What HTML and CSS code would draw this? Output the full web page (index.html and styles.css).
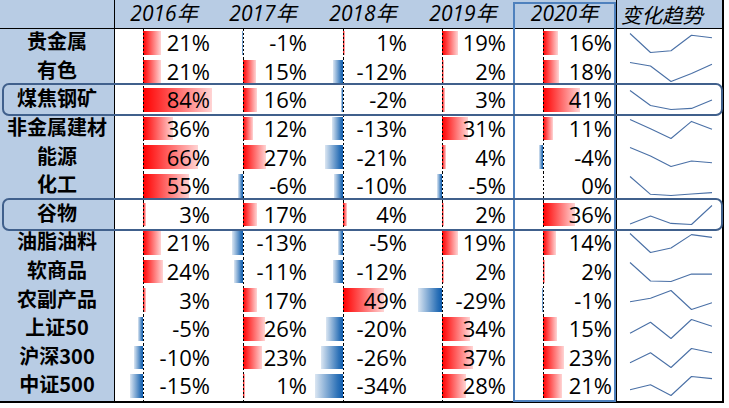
FILE: index.html
```html
<!DOCTYPE html>
<html lang="zh-CN">
<head>
<meta charset="utf-8">
<title>商品与指数年度涨跌</title>
<link rel="stylesheet" href="styles.css">
</head>
<body>
<div class="table">
  <div class="row head">
    <div class="lab"></div>
    <div class="hy">2016年</div>
    <div class="hy">2017年</div>
    <div class="hy">2018年</div>
    <div class="hy">2019年</div>
    <div class="hy">2020年</div>
    <div class="htrend"><span>变化趋势</span></div>
  </div>

  <div class="row">
    <div class="lab">贵金属</div>
    <div class="cell c16"><span class="bar pos" style="width:17.7px"></span><span class="axis"></span><span class="val">21%</span></div>
    <div class="cell c17"><span class="bar neg" style="width:1.5px"></span><span class="axis"></span><span class="val">-1%</span></div>
    <div class="cell c18"><span class="bar pos" style="width:1.5px"></span><span class="axis"></span><span class="val">1%</span></div>
    <div class="cell c19"><span class="bar pos" style="width:16.1px"></span><span class="axis"></span><span class="val">19%</span></div>
    <div class="cell c20"><span class="bar pos" style="width:14.6px"></span><span class="axis"></span><span class="val">16%</span></div>
    <div class="trend"><svg viewBox="0 0 105 28.6"><polyline points="13,4.5 33.5,23.5 54,21.8 74.5,6.2 95,8.8"/></svg></div>
  </div>

  <div class="row">
    <div class="lab">有色</div>
    <div class="cell c16"><span class="bar pos" style="width:17.7px"></span><span class="axis"></span><span class="val">21%</span></div>
    <div class="cell c17"><span class="bar pos" style="width:12.8px"></span><span class="axis"></span><span class="val">15%</span></div>
    <div class="cell c18"><span class="bar neg" style="width:10.3px"></span><span class="axis"></span><span class="val">-12%</span></div>
    <div class="cell c19"><span class="bar pos" style="width:2.1px"></span><span class="axis"></span><span class="val">2%</span></div>
    <div class="cell c20"><span class="bar pos" style="width:16.3px"></span><span class="axis"></span><span class="val">18%</span></div>
    <div class="trend"><svg viewBox="0 0 105 28.6"><polyline points="13,4.5 33.5,8 54,23.5 74.5,15.4 95,6.2"/></svg></div>
  </div>

  <div class="row hl">
    <div class="lab">煤焦钢矿</div>
    <div class="cell c16"><span class="bar pos" style="width:69.4px"></span><span class="axis"></span><span class="val">84%</span></div>
    <div class="cell c17"><span class="bar pos" style="width:13.6px"></span><span class="axis"></span><span class="val">16%</span></div>
    <div class="cell c18"><span class="bar neg" style="width:2.1px"></span><span class="axis"></span><span class="val">-2%</span></div>
    <div class="cell c19"><span class="bar pos" style="width:3px"></span><span class="axis"></span><span class="val">3%</span></div>
    <div class="cell c20"><span class="bar pos" style="width:36.6px"></span><span class="axis"></span><span class="val">41%</span></div>
    <div class="trend"><svg viewBox="0 0 105 28.6"><polyline points="13,4.5 33.5,19.5 54,23.5 74.5,22.4 95,14"/></svg></div>
  </div>

  <div class="row">
    <div class="lab">非金属建材</div>
    <div class="cell c16"><span class="bar pos" style="width:30px"></span><span class="axis"></span><span class="val">36%</span></div>
    <div class="cell c17"><span class="bar pos" style="width:10.3px"></span><span class="axis"></span><span class="val">12%</span></div>
    <div class="cell c18"><span class="bar neg" style="width:11.2px"></span><span class="axis"></span><span class="val">-13%</span></div>
    <div class="cell c19"><span class="bar pos" style="width:25.9px"></span><span class="axis"></span><span class="val">31%</span></div>
    <div class="cell c20"><span class="bar pos" style="width:10.2px"></span><span class="axis"></span><span class="val">11%</span></div>
    <div class="trend"><svg viewBox="0 0 105 28.6"><polyline points="13,4.5 33.5,13.8 54,23.5 74.5,6.4 95,14.2"/></svg></div>
  </div>

  <div class="row">
    <div class="lab">能源</div>
    <div class="cell c16"><span class="bar pos" style="width:54.6px"></span><span class="axis"></span><span class="val">66%</span></div>
    <div class="cell c17"><span class="bar pos" style="width:22.6px"></span><span class="axis"></span><span class="val">27%</span></div>
    <div class="cell c18"><span class="bar neg" style="width:17.7px"></span><span class="axis"></span><span class="val">-21%</span></div>
    <div class="cell c19"><span class="bar pos" style="width:3.8px"></span><span class="axis"></span><span class="val">4%</span></div>
    <div class="cell c20"><span class="bar neg" style="width:4px"></span><span class="axis"></span><span class="val">-4%</span></div>
    <div class="trend"><svg viewBox="0 0 105 28.6"><polyline points="13,4.5 33.5,13 54,23.5 74.5,18 95,19.8"/></svg></div>
  </div>

  <div class="row">
    <div class="lab">化工</div>
    <div class="cell c16"><span class="bar pos" style="width:45.6px"></span><span class="axis"></span><span class="val">55%</span></div>
    <div class="cell c17"><span class="bar neg" style="width:5.4px"></span><span class="axis"></span><span class="val">-6%</span></div>
    <div class="cell c18"><span class="bar neg" style="width:8.7px"></span><span class="axis"></span><span class="val">-10%</span></div>
    <div class="cell c19"><span class="bar neg" style="width:4.6px"></span><span class="axis"></span><span class="val">-5%</span></div>
    <div class="cell c20"><span class="axis"></span><span class="val">0%</span></div>
    <div class="trend"><svg viewBox="0 0 105 28.6"><polyline points="13,4.5 33.5,22.3 54,23.5 74.5,22 95,20.6"/></svg></div>
  </div>

  <div class="row hl">
    <div class="lab">谷物</div>
    <div class="cell c16"><span class="bar pos" style="width:3px"></span><span class="axis"></span><span class="val">3%</span></div>
    <div class="cell c17"><span class="bar pos" style="width:14.4px"></span><span class="axis"></span><span class="val">17%</span></div>
    <div class="cell c18"><span class="bar pos" style="width:3.8px"></span><span class="axis"></span><span class="val">4%</span></div>
    <div class="cell c19"><span class="bar pos" style="width:2.1px"></span><span class="axis"></span><span class="val">2%</span></div>
    <div class="cell c20"><span class="bar pos" style="width:32.2px"></span><span class="axis"></span><span class="val">36%</span></div>
    <div class="trend"><svg viewBox="0 0 105 28.6"><polyline points="13,22.9 33.5,15.1 54,22.4 74.5,23.5 95,4.5"/></svg></div>
  </div>

  <div class="row">
    <div class="lab">油脂油料</div>
    <div class="cell c16"><span class="bar pos" style="width:17.7px"></span><span class="axis"></span><span class="val">21%</span></div>
    <div class="cell c17"><span class="bar neg" style="width:11.2px"></span><span class="axis"></span><span class="val">-13%</span></div>
    <div class="cell c18"><span class="bar neg" style="width:4.6px"></span><span class="axis"></span><span class="val">-5%</span></div>
    <div class="cell c19"><span class="bar pos" style="width:16.1px"></span><span class="axis"></span><span class="val">19%</span></div>
    <div class="cell c20"><span class="bar pos" style="width:12.8px"></span><span class="axis"></span><span class="val">14%</span></div>
    <div class="trend"><svg viewBox="0 0 105 28.6"><polyline points="13,4.5 33.5,23.5 54,19 74.5,5.6 95,8.4"/></svg></div>
  </div>

  <div class="row">
    <div class="lab">软商品</div>
    <div class="cell c16"><span class="bar pos" style="width:20.2px"></span><span class="axis"></span><span class="val">24%</span></div>
    <div class="cell c17"><span class="bar neg" style="width:9.5px"></span><span class="axis"></span><span class="val">-11%</span></div>
    <div class="cell c18"><span class="bar neg" style="width:10.3px"></span><span class="axis"></span><span class="val">-12%</span></div>
    <div class="cell c19"><span class="bar pos" style="width:2.1px"></span><span class="axis"></span><span class="val">2%</span></div>
    <div class="cell c20"><span class="bar pos" style="width:2.3px"></span><span class="axis"></span><span class="val">2%</span></div>
    <div class="trend"><svg viewBox="0 0 105 28.6"><polyline points="13,4.5 33.5,23 54,23.5 74.5,16.1 95,16.1"/></svg></div>
  </div>

  <div class="row">
    <div class="lab">农副产品</div>
    <div class="cell c16"><span class="bar pos" style="width:3px"></span><span class="axis"></span><span class="val">3%</span></div>
    <div class="cell c17"><span class="bar pos" style="width:14.4px"></span><span class="axis"></span><span class="val">17%</span></div>
    <div class="cell c18"><span class="bar pos" style="width:40.7px"></span><span class="axis"></span><span class="val">49%</span></div>
    <div class="cell c19"><span class="bar neg" style="width:24.3px"></span><span class="axis"></span><span class="val">-29%</span></div>
    <div class="cell c20"><span class="bar neg" style="width:1.5px"></span><span class="axis"></span><span class="val">-1%</span></div>
    <div class="trend"><svg viewBox="0 0 105 28.6"><polyline points="13,15.7 33.5,12.3 54,4.5 74.5,23.5 95,16.7"/></svg></div>
  </div>

  <div class="row">
    <div class="lab">上证50</div>
    <div class="cell c16"><span class="bar neg" style="width:4.6px"></span><span class="axis"></span><span class="val">-5%</span></div>
    <div class="cell c17"><span class="bar pos" style="width:21.8px"></span><span class="axis"></span><span class="val">26%</span></div>
    <div class="cell c18"><span class="bar neg" style="width:16.9px"></span><span class="axis"></span><span class="val">-20%</span></div>
    <div class="cell c19"><span class="bar pos" style="width:28.4px"></span><span class="axis"></span><span class="val">34%</span></div>
    <div class="cell c20"><span class="bar pos" style="width:13.7px"></span><span class="axis"></span><span class="val">15%</span></div>
    <div class="trend"><svg viewBox="0 0 105 28.6"><polyline points="13,18.2 33.5,7.3 54,23.5 74.5,4.5 95,11.2"/></svg></div>
  </div>

  <div class="row">
    <div class="lab">沪深300</div>
    <div class="cell c16"><span class="bar neg" style="width:8.7px"></span><span class="axis"></span><span class="val">-10%</span></div>
    <div class="cell c17"><span class="bar pos" style="width:19.4px"></span><span class="axis"></span><span class="val">23%</span></div>
    <div class="cell c18"><span class="bar neg" style="width:21.8px"></span><span class="axis"></span><span class="val">-26%</span></div>
    <div class="cell c19"><span class="bar pos" style="width:30.8px"></span><span class="axis"></span><span class="val">37%</span></div>
    <div class="cell c20"><span class="bar pos" style="width:20.7px"></span><span class="axis"></span><span class="val">23%</span></div>
    <div class="trend"><svg viewBox="0 0 105 28.6"><polyline points="13,18.7 33.5,8.7 54,23.5 74.5,4.5 95,8.7"/></svg></div>
  </div>

  <div class="row">
    <div class="lab">中证500</div>
    <div class="cell c16"><span class="bar neg" style="width:12.8px"></span><span class="axis"></span><span class="val">-15%</span></div>
    <div class="cell c17"><span class="bar pos" style="width:1.5px"></span><span class="axis"></span><span class="val">1%</span></div>
    <div class="cell c18"><span class="bar neg" style="width:28.4px"></span><span class="axis"></span><span class="val">-34%</span></div>
    <div class="cell c19"><span class="bar pos" style="width:23.5px"></span><span class="axis"></span><span class="val">28%</span></div>
    <div class="cell c20"><span class="bar pos" style="width:19px"></span><span class="axis"></span><span class="val">21%</span></div>
    <div class="trend"><svg viewBox="0 0 105 28.6"><polyline points="13,17.7 33.5,12.8 54,23.5 74.5,4.5 95,6.6"/></svg></div>
  </div>

  <div class="box2020"></div>
</div>
</body>
</html>
```

FILE: styles.css
```css
html, body {
  margin: 0;
  padding: 0;
  background: #ffffff;
}

.table {
  position: relative;
  width: 722px;
  border-right: 2px solid #000;
  border-bottom: 2px solid #000;
  font-family: "Open Sans", "Noto Sans CJK SC", sans-serif;
  color: #000;
}

.row {
  display: grid;
  grid-template-columns: 115px 98px 100px 100px 100px 103px 106px;
  height: 28.6px;
}

.row.head {
  height: 29px;
  box-sizing: border-box;
  border-bottom: 1px solid #000;
  background: #b8cce4;
}

.lab {
  box-sizing: border-box;
  border-right: 1px solid #000;
  background: #b8cce4;
  display: flex;
  align-items: center;
  justify-content: center;
  padding-bottom: 4px;
  font-family: "Noto Sans CJK SC", sans-serif;
  font-weight: bold;
  font-size: 20px;
  line-height: 1;
  white-space: nowrap;
}

.hy, .htrend {
  display: flex;
  align-items: center;
  font-style: italic;
  font-size: 21px;
  line-height: 1.2;
  white-space: nowrap;
}

.hy {
  justify-content: center;
}

.htrend {
  box-sizing: border-box;
  border-left: 1px solid #000;
  justify-content: flex-start;
  padding-left: 4px;
  font-family: "Noto Sans CJK SC", sans-serif;
  font-size: 20.5px;
}

.htrend span {
  padding-right: 4px;
}

.cell {
  display: grid;
  grid-template-columns: var(--ax) 1fr;
  grid-template-rows: 1fr;
  background: #fff;
  min-width: 0;
}

.c16 { --ax: 28px; --pr: 3px; }
.c17 { --ax: 30px; --pr: 6px; }
.c18 { --ax: 30px; --pr: 6px; }
.c19 { --ax: 29px; --pr: 7px; }
.c20 { --ax: 30px; --pr: 4px; }

.bar {
  grid-row: 1;
  margin: 2px 0 3px;
}

.bar.pos {
  grid-column: 2;
  justify-self: start;
  background: linear-gradient(90deg, #ff0000 0%, #ff2a2a 20%, #ffd4d4 100%);
}

.bar.neg {
  grid-column: 1;
  justify-self: end;
  background: linear-gradient(270deg, #0e5cae 0%, #2f73b8 20%, #dbe6f2 100%);
}

.axis {
  grid-column: 2;
  grid-row: 1;
  justify-self: start;
  width: 1px;
  z-index: 1;
  background: repeating-linear-gradient(to bottom, #000 0 2px, transparent 2px 4px);
}

.val {
  grid-column: 1 / -1;
  grid-row: 1;
  justify-self: end;
  align-self: center;
  z-index: 2;
  padding-right: var(--pr);
  margin-bottom: 2px;
  font-size: 22px;
  line-height: 1;
  white-space: nowrap;
}

.trend {
  box-sizing: border-box;
  border-left: 1px solid #000;
  background: #fff;
  display: flex;
}

.trend svg {
  width: 105px;
  height: 28.6px;
  display: block;
}

.trend polyline {
  fill: none;
  stroke: #4a70a6;
  stroke-width: 1.1;
  stroke-linejoin: round;
}

.row.hl {
  position: relative;
}

.row.hl::after {
  content: "";
  position: absolute;
  top: -3px;
  bottom: -1.5px;
  left: 1.5px;
  right: -0.5px;
  border: 2.5px solid #40608c;
  border-radius: 7px;
  z-index: 4;
  pointer-events: none;
}

.box2020 {
  position: absolute;
  left: 513px;
  top: 2px;
  bottom: -1.5px;
  width: 102.7px;
  box-sizing: border-box;
  border: 2.5px solid #4f81bd;
  z-index: 3;
  pointer-events: none;
}
```
